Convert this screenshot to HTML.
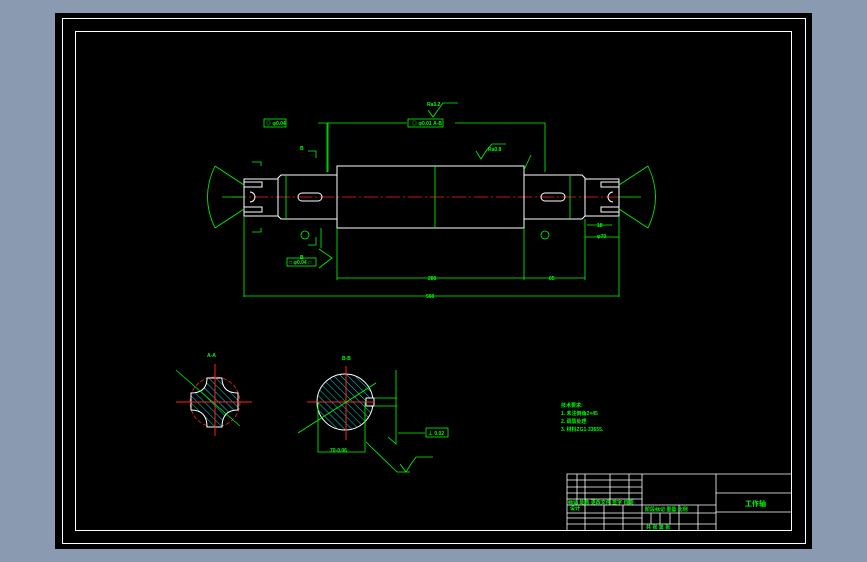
<!DOCTYPE html>
<html><head><meta charset="utf-8"><style>
html,body{margin:0;padding:0;background:#8a9ab0;width:867px;height:562px;overflow:hidden}
svg{display:block}
text{font-family:"Liberation Sans","Noto Sans CJK SC",sans-serif;fill:#00ff00;font-size:5px;font-weight:bold}
</style></head><body>
<svg width="867" height="562" viewBox="0 0 867 562" xmlns="http://www.w3.org/2000/svg">
<defs><pattern id="h" width="5" height="5" patternUnits="userSpaceOnUse" patternTransform="rotate(-45)"><rect width="5" height="5" fill="#000"/><line x1="0" y1="0" x2="0" y2="5" stroke="#00d8d8" stroke-width="1"/></pattern></defs>
<rect x="0" y="0" width="867" height="562" fill="#8a9ab0"/>
<rect x="55" y="13" width="757" height="536" fill="#000"/>
<g fill="none" stroke="#fff" stroke-width="1">
<rect x="62.5" y="18.5" width="743" height="525"/>
<rect x="75.5" y="31.5" width="716" height="499"/>
</g>
<line x1="232" y1="197" x2="625" y2="197" stroke="#ff2020" stroke-width="0.8" stroke-dasharray="14,3,2,3"/>
<g fill="none" stroke="#fff" stroke-width="1">
<rect x="337" y="166" width="187" height="62"/>
<path d="M337,175 H281 L278,178 V216 L281,219 H337"/>
<path d="M524,175 H582 L585,178 V216 L582,219 H524"/>
<rect x="244" y="179" width="34" height="37"/>
<rect x="585" y="179" width="34" height="37"/>
<rect x="244" y="182" width="18" height="5"/><rect x="244" y="207" width="18" height="5"/>
<rect x="601" y="182" width="18" height="5"/><rect x="601" y="207" width="18" height="5"/>
<rect x="298" y="193" width="24" height="8" rx="4"/>
<rect x="541" y="193" width="24" height="8" rx="4"/>
<path d="M250,192 a5,5 0 0 1 0,10"/><path d="M613,192 a5,5 0 0 0 0,10"/>
</g>
<g fill="none" stroke="#00ff00" stroke-width="0.8">
<line x1="435" y1="166" x2="435" y2="228"/>
<line x1="286" y1="175" x2="286" y2="219"/><line x1="570" y1="175" x2="570" y2="219"/>
<line x1="244" y1="216" x2="244" y2="297"/><line x1="619" y1="216" x2="619" y2="297"/>
<line x1="244" y1="296" x2="619" y2="296"/>
<line x1="337" y1="228" x2="337" y2="280"/><line x1="524" y1="228" x2="524" y2="280"/>
<line x1="585" y1="219" x2="585" y2="280"/>
<line x1="337" y1="278" x2="585" y2="278"/>
<line x1="585" y1="237" x2="619" y2="237"/><line x1="587" y1="225" x2="612" y2="225"/>
<path d="M318,123 H327 V172"/><path d="M328,172 V123 H407"/><path d="M455,123 H545 V172"/>
<rect x="408" y="119" width="35" height="8"/><rect x="264" y="119" width="22" height="8"/>
<rect x="287" y="258" width="29" height="8"/>
<path d="M319,268 L332,258 L319,249"/><path d="M321,228 V248"/>
<path d="M308,151 H316 V158"/><path d="M308,245 H316 V237"/>
<path d="M252,162 H261 V166"/><path d="M252,232 H261 V228"/>
<path d="M476,151 L481,159 L486,151 M486,151 L492,144 H506"/>
<path d="M428,110 L433,117 L438,110 M438,110 L443,103 H458"/>
<path d="M215,166 L244,185 M215,228 L244,209 M215,166 Q200,197 215,228"/>
<path d="M648,166 L619,185 M648,228 L619,209 M648,166 Q663,197 648,228"/>
<line x1="222" y1="197" x2="244" y2="197"/><line x1="619" y1="197" x2="641" y2="197"/>
<circle cx="305" cy="235" r="4"/><circle cx="545" cy="235" r="4"/>
<line x1="531" y1="155" x2="524" y2="170"/>
</g>
<g>
<circle cx="215" cy="402" r="25" fill="none" stroke="#ff2020" stroke-width="0.8" stroke-dasharray="4,2"/>
<path d="M207,378 H222 Q222,393 238,393 V410 Q222,410 222,427 H207 Q207,410 191,410 V393 Q207,393 207,378 Z" fill="url(#h)" stroke="#fff" stroke-width="1"/>
<line x1="176" y1="402" x2="252" y2="402" stroke="#ff2020"/><line x1="215" y1="364" x2="215" y2="436" stroke="#ff2020"/>
<line x1="176" y1="370" x2="240" y2="426" stroke="#00ff00" stroke-width="0.7"/>
<circle cx="345" cy="402" r="28" fill="url(#h)" stroke="#fff" stroke-width="1"/>
<rect x="366" y="398" width="8" height="8" fill="#000" stroke="#fff"/>
<line x1="307" y1="402" x2="375" y2="402" stroke="#ff2020"/><line x1="346" y1="366" x2="346" y2="440" stroke="#ff2020"/>
<g fill="none" stroke="#00ff00" stroke-width="0.8">
<path d="M298,433 L376,383"/>
<path d="M318,402 V452 H365 V402"/>
<path d="M374,398 H397 M374,406 H397 M396,370 V444 L388,437 L396,444"/>
<path d="M398,433 H425"/><rect x="426" y="428" width="22" height="9"/>
<path d="M366,442 L397,472 H410 M400,464 L406,472 L411,464 M411,464 L416,457 H433"/>
</g>
</g>
<text x="427" y="106">Ra3.2</text><text x="488" y="151">Ra0.8</text>
<text x="412" y="125">◎ φ0.01 A-B</text><text x="266" y="125">◎ φ0.04</text>
<text x="289" y="264">□ φ0.04 □</text>
<text x="428" y="280">280</text><text x="549" y="280">65</text><text x="426" y="298">560</text>
<text x="597" y="227">18</text><text x="597" y="238">φ70</text>
<text x="300" y="150">B</text><text x="300" y="259">B</text>
<text x="207" y="357">A-A</text><text x="342" y="360">B-B</text>
<text x="330" y="452">70-0.06</text>
<text x="428" y="435">⊥ 0.02</text>
<text x="561" y="407">技术要求:</text>
<text x="561" y="415">1. 未注倒角2×45</text>
<text x="561" y="423">2. 调质处理</text>
<text x="561" y="431">3. 材料ZG1-33655.</text>
<g fill="none" stroke="#fff" stroke-width="0.8">
<path d="M567,530 V474 H791 M642,474 V530 M716,474 V530 M716,493 H791 M716,512 H791"/>
<path d="M567,480 H642 M567,487 H642 M567,493 H642 M567,499 H642 M567,505 H716 M567,513 H716 M567,518 H642 M567,524 H716"/>
<path d="M577,474 V505 M585,474 V530 M610,474 V505 M629,474 V505 M604,505 V530 M623,505 V530 M679,505 V530 M698,505 V530 M651,513 V524 M660,513 V524 M670,513 V524"/>
</g>
<text x="745" y="506" style="font-size:7px">工作轴</text>
<text x="568" y="504">标记 处数 更改文件 签字 日期</text>
<text x="645" y="511">阶段标记 重量 比例</text>
<text x="570" y="510">设计</text><text x="646" y="529">共 张 第 张</text>
</svg>
</body></html>
